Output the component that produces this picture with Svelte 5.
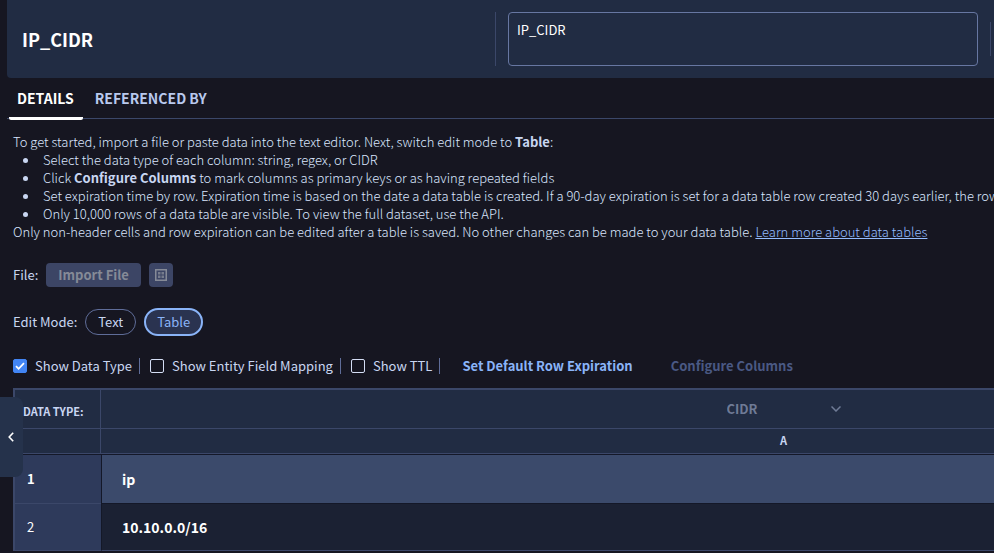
<script>
  let description = $state('IP_CIDR');
  let mode = $state('Table');
  let collapsed = $state(false);
  let options = $state([
    { label: 'Show Data Type', on: true },
    { label: 'Show Entity Field Mapping', on: false },
    { label: 'Show TTL', on: false }
  ]);
  const rows = ['ip', '10.10.0.0/16'];
</script>

<main>
  <header>
    <h1>IP_CIDR</h1>
    <div class="describe">
      <textarea aria-label="Description" bind:value={description}></textarea>
    </div>
    <div class="rest"></div>
  </header>

  <nav>
    <a class="active" href="#details">DETAILS</a>
    <a href="#referenced">REFERENCED BY</a>
  </nav>

  <section class="intro">
    <p>To get started, import a file or paste data into the text editor. Next, switch edit mode to <b>Table</b>:</p>
    <ul>
      <li>Select the data type of each column: string, regex, or CIDR</li>
      <li>Click <b>Configure Columns</b> to mark columns as primary keys or as having repeated fields</li>
      <li>Set expiration time by row. Expiration time is based on the date a data table is created. If a 90-day expiration is set for a data table row created 30 days earlier, the row</li>
      <li>Only 10,000 rows of a data table are visible. To view the full dataset, use the API.</li>
    </ul>
    <p>Only non-header cells and row expiration can be edited after a table is saved. No other changes can be made to your data table. <a href="#learn">Learn more about data tables</a></p>
  </section>

  <div class="file">
    <span>File:</span>
    <button class="import" disabled>Import File</button>
    <button class="grid" disabled aria-label="Open grid">
      <svg width="12" height="12" viewBox="0 0 12 12" fill="currentColor">
        <path fill-rule="evenodd" d="M0 0h12v12H0zM1.500 1.500v9h9v-9z" />
        <path d="M3 3h2.500v2.500H3zM6.500 3H9v2.500H6.500zM3 6.500h2.500V9H3zM6.500 6.500H9V9H6.500z" />
      </svg>
    </button>
  </div>

  <div class="mode">
    <span>Edit Mode:</span>
    {#each ['Text', 'Table'] as name}
      <button class:chosen={mode === name} aria-pressed={mode === name} onclick={() => (mode = name)}>{name}</button>
    {/each}
  </div>

  <div class="options">
    {#each options as option}
      <label><input type="checkbox" bind:checked={option.on} /><span>{option.label}</span></label>
    {/each}
    <button class="action">Set Default Row Expiration</button>
    <button class="action" disabled>Configure Columns</button>
  </div>

  <div class="sheet">
    <table>
      <thead>
        <tr class="types">
          <th scope="row">DATA TYPE:</th>
          <td>
            <div class="picker">
              <select aria-label="Data type of column A" disabled>
                <option>CIDR</option>
              </select>
              <svg width="10" height="6" viewBox="0 0 10 6" fill="none" stroke="currentColor" stroke-width="1.5">
                <path d="M0.5 0.5L5 5L9.500 0.5" />
              </svg>
            </div>
          </td>
        </tr>
        <tr class="letters">
          <td></td>
          <th scope="col">A</th>
        </tr>
      </thead>
      <tbody>
        {#each rows as value, i}
          <tr class:head={i === 0}>
            <th scope="row">{i + 1}</th>
            <td>{value}</td>
          </tr>
        {/each}
      </tbody>
    </table>
  </div>

  <button class="drawer" aria-label="Toggle side panel" aria-expanded={!collapsed} onclick={() => (collapsed = !collapsed)}>
    <svg width="6" height="10" viewBox="0 0 6 10" fill="none" stroke="currentColor" stroke-width="1.6">
      <path d="M5.2 0.8L1.200 5L5.200 9.200" />
    </svg>
  </button>
</main>

<style>
  :global(body) {
    margin: 0;
    background: #161621;
  }
  main {
    position: relative;
    min-height: 100vh;
    overflow: hidden;
    background: #161621;
    color: #c9d6f2;
    font: 13px/18px 'Noto Sans CJK SC', 'Source Sans Pro', sans-serif;
    white-space: nowrap;
  }
  main * {
    box-sizing: border-box;
  }
  button, select, textarea {
    font: inherit;
    color: inherit;
    margin: 0;
  }
  header {
    display: flex;
    align-items: center;
    height: 78px;
    margin-left: 7px;
    background: #212c43;
    border-radius: 0 0 0 4px;
  }
  h1 {
    flex: 1 1 18px;
    margin: 0;
    padding-left: 15px;
    font-size: 18px;
    line-height: 24px;
    color: #fff;
  }
  .describe {
    flex: 1;
    display: flex;
    height: 54px;
    padding: 0 12px;
    border-left: 1px solid #3b4769;
  }
  textarea {
    flex: 1;
    height: 54px;
    padding: 8px;
    resize: none;
    border: 1px solid #6777a2;
    border-radius: 4px;
    background: none;
    color: #fff;
    outline: none;
  }
  .rest {
    width: 4px;
    height: 34px;
    border-left: 1px solid #3b4769;
  }
  nav {
    display: flex;
    gap: 4px;
    height: 41px;
    margin-left: 7px;
    padding-left: 2px;
    border-bottom: 1px solid #3b4769;
  }
  nav a {
    height: 42px;
    padding: 8px 9px 0 8px;
    font-size: 14px;
    line-height: 24px;
    font-weight: 700;
    color: #b9c9ee;
    text-decoration: none;
  }
  nav a.active {
    color: #fff;
    border-bottom: 3px solid #fff;
    border-radius: 2px;
  }
  .intro {
    padding: 14px 0 0 13px;
    color: #dbe6ff;
    font-weight: 300;
  }
  p, ul {
    margin: 0;
  }
  b {
    color: #c9d6f2;
    font-weight: 700;
  }
  ul {
    padding-left: 10px;
    list-style: none;
  }
  li::before {
    content: '';
    display: inline-block;
    width: 5px;
    height: 5px;
    margin-right: 15px;
    border-radius: 50%;
    background: #c9d6f2;
    vertical-align: 2px;
  }
  .intro a {
    color: #94bcff;
  }
  .file, .mode, .options {
    display: flex;
    align-items: center;
    padding-left: 13px;
  }
  .file {
    gap: 8px;
    margin-top: 22px;
  }
  .file button {
    height: 24px;
    border: 0;
    border-radius: 4px;
    background: #3c4565;
    color: #858a97;
    font-weight: 700;
  }
  .file .import {
    padding: 0 12px;
  }
  .file .grid {
    display: grid;
    place-items: center;
    width: 24px;
    padding: 0;
  }
  .file .grid path:last-child {
    opacity: 0.8;
  }
  .mode {
    gap: 8px;
    margin-top: 21px;
  }
  .mode button {
    height: 26px;
    padding: 0 12px;
    border: 1px solid #5f6d99;
    border-radius: 14px;
    background: none;
  }
  .mode .chosen {
    height: 28px;
    padding: 0 11px;
    border: 2px solid #8ab4f8;
    background: #2a3350;
    color: #8ab4f8;
  }
  .options {
    height: 18px;
    margin-top: 21px;
  }
  label {
    display: flex;
    align-items: center;
    gap: 8px;
    height: 16px;
    padding-right: 7px;
    margin-right: 10px;
    border-right: 1px solid #5f6d99;
  }
  input {
    appearance: none;
    width: 14px;
    height: 14px;
    margin: 0;
    border: 1px solid #d5def5;
    border-radius: 2px;
  }
  input:checked {
    border-color: #4285f4;
    background: #4285f4 url("data:image/svg+xml,%3Csvg xmlns='http://www.w3.org/2000/svg' viewBox='0 0 12 12' fill='none' stroke='white' stroke-width='1.800'%3E%3Cpath d='M2 6.200l2.600 2.600L10 3.200'/%3E%3C/svg%3E") center / 12px no-repeat;
  }
  .action {
    padding: 0 12px;
    margin-right: 14px;
    border: 0;
    background: none;
    color: #8ab4f8;
    font-weight: 700;
  }
  .action:disabled {
    color: #4a5984;
  }
  .sheet {
    margin: 13px 0 0 13px;
    overflow: hidden;
  }
  table {
    width: 1455px;
    table-layout: fixed;
    border-collapse: separate;
    border-spacing: 0;
    border: 2px solid #3b4769;
    border-bottom: 0;
  }
  th, td {
    padding: 0;
    text-align: left;
  }
  thead th, thead td {
    background: #212c43;
    border-bottom: 1px solid #3b4769;
  }
  thead tr > :first-child {
    width: 86px;
    border-right: 1px solid #3b4769;
  }
  .types > * {
    height: 39px;
  }
  .types th {
    padding: 4px 0 0 8px;
    font-size: 11px;
  }
  .letters > * {
    height: 25px;
  }
  .letters th {
    padding-bottom: 2px;
    text-align: center;
    font-size: 11px;
    line-height: 16px;
  }
  .picker {
    display: flex;
    align-items: center;
    width: 114px;
    margin: 0 auto;
    color: #6f7b96;
  }
  select {
    flex: 1;
    appearance: none;
    padding: 0;
    border: 0;
    background: none;
    font-weight: 700;
    opacity: 1;
  }
  tbody th, tbody td {
    height: 48px;
    border-top: 1px solid #141828;
    color: #fff;
  }
  tbody th {
    padding-left: 12px;
    background: #2e3a5b;
    border-top-color: #3b4769;
    font-weight: 400;
  }
  tbody td {
    padding: 0 0 0 20px;
    background: #1b2133;
    border-left: 1px solid #141828;
    font-size: 14px;
    font-weight: 700;
  }
  tbody .head > * {
    height: 49px;
    border-top-color: #141828;
  }
  .head th {
    font-weight: 700;
  }
  .head td {
    background: #3b4a6b;
  }
  tbody tr:last-child > * {
    border-bottom: 1px solid #3b4769;
  }
  .drawer {
    position: absolute;
    left: 0;
    top: 397px;
    display: flex;
    align-items: center;
    width: 23px;
    height: 80px;
    padding: 0 0 0 8px;
    border: 0;
    border-radius: 0 8px 8px 0;
    background: #25324b;
    color: #fff;
  }
</style>
